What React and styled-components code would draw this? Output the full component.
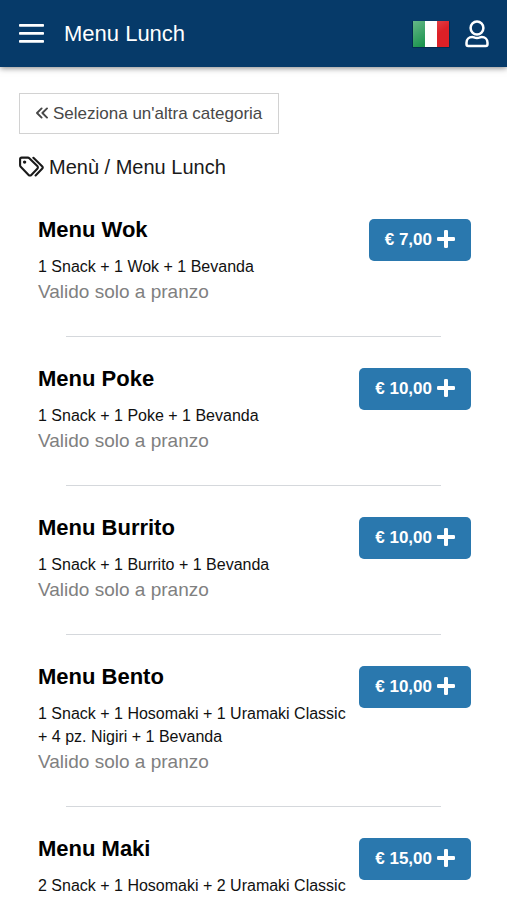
import React from "react"
import styled, { createGlobalStyle } from "styled-components"

const GlobalStyle = createGlobalStyle`
  * {
    box-sizing: border-box;
  }

  body {
    margin: 0;
    background: #fff;
    color: #111;
    font-family: "Liberation Sans", Arial, sans-serif;
  }
`

const TopBar = styled.header`
  display: flex;
  align-items: center;
  height: 67px;
  padding: 0 18px 0 19px;
  background: #063a69;
  color: #fff;
  box-shadow: 0 1px 6px rgba(0, 0, 0, 0.5);
`

const IconButton = styled.button`
  display: flex;
  padding: 0;
  border: 0;
  background: none;
  color: inherit;
  cursor: pointer;
`

const PageTitle = styled.h1`
  flex: 1;
  margin: 0 20px;
  font-size: 22px;
  line-height: 24px;
  font-weight: 400;
`

const Actions = styled.div`
  display: flex;
  align-items: center;
  gap: 14px;
`

const Content = styled.main`
  padding: 26px 19px;
`

const BackLink = styled.a`
  display: inline-flex;
  align-items: center;
  gap: 5px;
  height: 41px;
  padding: 0 16px;
  border: 1px solid #d2d2d2;
  color: #484848;
  font-size: 17px;
  line-height: 20px;
  text-decoration: none;
`

const Breadcrumb = styled.nav`
  display: flex;
  align-items: center;
  gap: 5px;
  margin-top: 20px;
  font-size: 20px;
  line-height: 26px;
  color: #1a1a1a;
`

const MenuList = styled.ul`
  margin: 8px 0 0;
  padding: 0;
  list-style: none;
`

const MenuItem = styled.li`
  & + &::before {
    content: "";
    display: block;
    width: 80%;
    height: 1px;
    margin: 0 auto;
    background: #d5d8dc;
  }
`

const ItemRow = styled.div`
  display: flex;
  align-items: flex-start;
  gap: 8px;
  padding: 30px 17px 30px 19px;
`

const ItemText = styled.div`
  flex: 1;
  min-width: 0;
`

const ItemName = styled.h2`
  margin: 0 0 13px;
  font-size: 22px;
  line-height: 24px;
  font-weight: 700;
  color: #000;
`

const Description = styled.p`
  margin: 0;
  font-size: 16px;
  line-height: 23px;
`

const Note = styled.p`
  margin: 0;
  font-size: 19px;
  line-height: 28px;
  color: #808080;
`

const PriceButton = styled.button`
  display: flex;
  align-items: center;
  flex: none;
  gap: 5px;
  height: 42px;
  margin-top: 1px;
  padding: 0 16px;
  border: 0;
  border-radius: 5px;
  background: #2a78ae;
  color: #fff;
  font-family: inherit;
  font-size: 17px;
  line-height: 20px;
  font-weight: 700;
  white-space: nowrap;
  cursor: pointer;
`

const BarsIcon = () => (
  <svg width="25" height="21" viewBox="0 0 25 21" fill="currentColor" aria-hidden="true">
    <rect x="0" y="1" width="25" height="2.8" rx="0.8" />
    <rect x="0" y="9" width="25" height="2.8" rx="0.8" />
    <rect x="0" y="17" width="25" height="2.8" rx="0.8" />
  </svg>
)

const FlagIcon = () => (
  <svg width="40" height="30" viewBox="0 0 40 30" aria-hidden="true">
    <defs>
      <linearGradient id="gloss" x1="0" y1="0" x2="1" y2="1">
        <stop offset="0" stopColor="#fff" stopOpacity="0.32" />
        <stop offset="0.6" stopColor="#fff" stopOpacity="0" />
      </linearGradient>
    </defs>
    <rect x="1" y="2" width="38" height="27" rx="1" fill="#032b50" />
    <rect x="2" y="2" width="12" height="26" fill="#1d9550" />
    <rect x="14" y="2" width="12" height="26" fill="#fff" />
    <rect x="26" y="2" width="12" height="26" fill="#dd2027" />
    <rect x="2" y="2" width="36" height="26" fill="url(#gloss)" />
  </svg>
)

const UserIcon = () => (
  <svg
    width="24"
    height="28"
    viewBox="0 0 24 28"
    fill="none"
    stroke="currentColor"
    strokeWidth="2.5"
    strokeLinejoin="round"
    aria-hidden="true"
  >
    <circle cx="12" cy="8" r="6.4" />
    <path d="M7.2 17C4 17 1.5 19.5 1.5 22.7V24.2C1.5 25.2 2.2 25.9 3.2 25.9H20.8C21.8 25.9 22.5 25.2 22.5 24.2V22.7C22.5 19.5 20 17 16.8 17C15.3 17 14.6 18 12 18C9.4 18 8.7 17 7.2 17Z" />
  </svg>
)

const ChevronsIcon = () => (
  <svg
    width="12"
    height="14"
    viewBox="0 0 12 14"
    fill="none"
    stroke="currentColor"
    strokeWidth="1.9"
    strokeLinecap="round"
    strokeLinejoin="round"
    aria-hidden="true"
  >
    <path d="M5.6 1.4L1 6L5.6 10.6M11 1.4L6.4 6L11 10.6" />
  </svg>
)

const TagsIcon = () => (
  <svg
    width="25"
    height="22"
    viewBox="0 0 25 22"
    fill="none"
    stroke="currentColor"
    strokeWidth="2.1"
    strokeLinecap="round"
    strokeLinejoin="round"
    aria-hidden="true"
  >
    <path d="M1.1 3.2V9.3C1.1 9.9 1.3 10.4 1.7 10.8L9.6 18.9C10.4 19.7 11.5 19.7 12.3 18.9L18.3 12.8C19.1 12 19.1 10.9 18.3 10.1L10.3 2.2C9.9 1.8 9.4 1.6 8.8 1.6H2.7C1.8 1.6 1.1 2.3 1.1 3.2Z" />
    <path d="M14.4 1.8L23.1 10.3C23.9 11.1 23.9 12 23.1 12.8L16.6 19.4" />
    <circle cx="5.6" cy="6.1" r="1.7" fill="currentColor" stroke="none" />
  </svg>
)

const PlusIcon = () => (
  <svg width="18" height="20" viewBox="0 0 18 20" fill="currentColor" aria-hidden="true">
    <rect x="0" y="7" width="18" height="4" rx="1.3" />
    <rect x="7" y="0" width="4" height="18" rx="1.3" />
  </svg>
)

const lunchNote = "Valido solo a pranzo"

const menus = [
  { name: "Menu Wok", price: "7,00", description: "1 Snack + 1 Wok + 1 Bevanda", note: lunchNote },
  { name: "Menu Poke", price: "10,00", description: "1 Snack + 1 Poke + 1 Bevanda", note: lunchNote },
  { name: "Menu Burrito", price: "10,00", description: "1 Snack + 1 Burrito + 1 Bevanda", note: lunchNote },
  {
    name: "Menu Bento",
    price: "10,00",
    description: "1 Snack + 1 Hosomaki + 1 Uramaki Classic + 4 pz. Nigiri + 1 Bevanda",
    note: lunchNote,
  },
  { name: "Menu Maki", price: "15,00", description: "2 Snack + 1 Hosomaki + 2 Uramaki Classic" },
]

const App = () => (
  <>
    <GlobalStyle />
    <TopBar>
      <IconButton type="button" aria-label="Apri menu">
        <BarsIcon />
      </IconButton>
      <PageTitle>Menu Lunch</PageTitle>
      <Actions>
        <IconButton type="button" aria-label="Lingua: italiano">
          <FlagIcon />
        </IconButton>
        <IconButton type="button" aria-label="Profilo">
          <UserIcon />
        </IconButton>
      </Actions>
    </TopBar>
    <Content>
      <BackLink href="#categorie">
        <ChevronsIcon />
        Seleziona un'altra categoria
      </BackLink>
      <Breadcrumb>
        <TagsIcon />
        Menù / Menu Lunch
      </Breadcrumb>
      <MenuList>
        {menus.map(({ name, price, description, note }) => (
          <MenuItem key={name}>
            <ItemRow>
              <ItemText>
                <ItemName>{name}</ItemName>
                <Description>{description}</Description>
                {note && <Note>{note}</Note>}
              </ItemText>
              <PriceButton type="button">
                € {price}
                <PlusIcon />
              </PriceButton>
            </ItemRow>
          </MenuItem>
        ))}
      </MenuList>
    </Content>
  </>
)

export default App
